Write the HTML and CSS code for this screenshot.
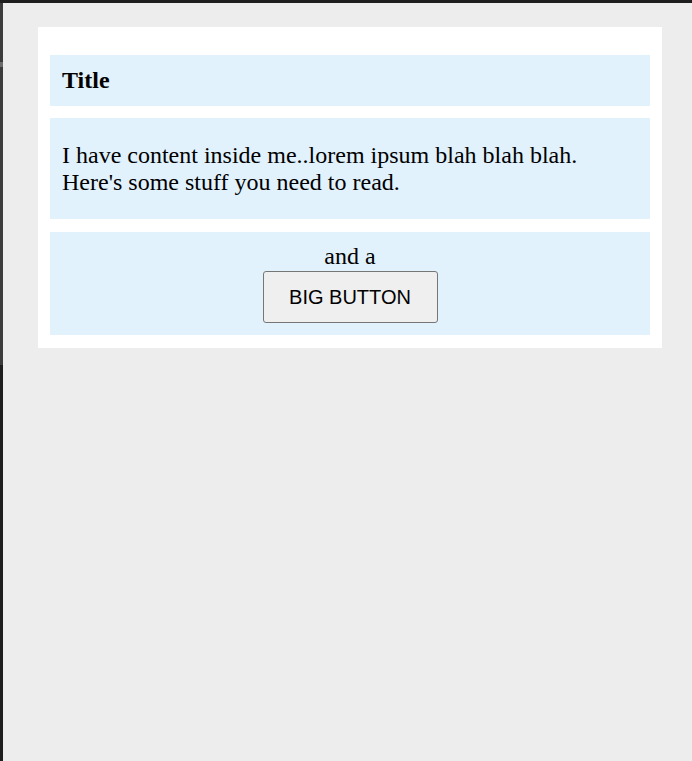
FILE: index.html
```html
<!DOCTYPE html>
<html>
<head>
<meta charset="utf-8">
<link rel="stylesheet" href="styles.css">
</head>
<body>
<div class="topbar"></div>
<div class="frame">
  <div class="sidebar">
    <div class="side-upper"><div class="side-mark"></div></div>
    <div class="side-lower"></div>
  </div>
  <main class="main">
    <div class="card">
      <div class="box box-title">Title</div>
      <div class="box box-content">
        <p class="text">I have content inside me..lorem ipsum blah blah blah.<br>Here's some stuff you need to read.</p>
      </div>
      <div class="box box-action">
        <div class="and">and a</div>
        <button class="big-button">BIG BUTTON</button>
      </div>
    </div>
  </main>
</div>
</body>
</html>
```
FILE: styles.css
```css
html, body {
  margin: 0;
  padding: 0;
  height: 100%;
}
body {
  background: #ededed;
  font-family: "Liberation Serif", "Times New Roman", serif;
  font-size: 24px;
  color: #000;
  display: flex;
  flex-direction: column;
  overflow: hidden;
}
.topbar {
  height: 3px;
  background: #1e1e1e;
  flex: none;
}
.frame {
  flex: 1;
  display: flex;
}
.sidebar {
  width: 3px;
  flex: none;
  display: flex;
  flex-direction: column;
}
.side-upper {
  height: 362px;
  background: #3c3c3c;
  padding-top: 59px;
  box-sizing: border-box;
}
.side-mark {
  height: 5px;
  background: #6b6b6b;
}
.side-lower {
  flex: 1;
  background: #1e1e1e;
}
.main {
  flex: 1;
  padding: 24px 0 0 35px;
}
.card {
  width: 600px;
  background: #fff;
  padding: 28px 12px 13px;
  display: flex;
  flex-direction: column;
  gap: 12.5px;
}
.box {
  background: #e1f2fd;
  padding: 0 12px;
}
.box-title {
  font-weight: bold;
  height: 50.5px;
  padding-top: 11.5px;
  box-sizing: border-box;
}
.box-content {
  height: 101px;
  box-sizing: border-box;
  padding-top: 24px;
}
.text {
  margin: 0;
}
.box-action {
  height: 103px;
  box-sizing: border-box;
  padding-top: 11.5px;
  display: flex;
  flex-direction: column;
  align-items: center;
}
.and {
  height: 28px;
}
.big-button {
  width: 175px;
  height: 52px;
  font-family: "Liberation Sans", Arial, sans-serif;
  font-size: 20px;
  color: #000;
  background: #efefef;
  border: 1px solid #767676;
  border-radius: 3px;
  padding: 0;
}
```
